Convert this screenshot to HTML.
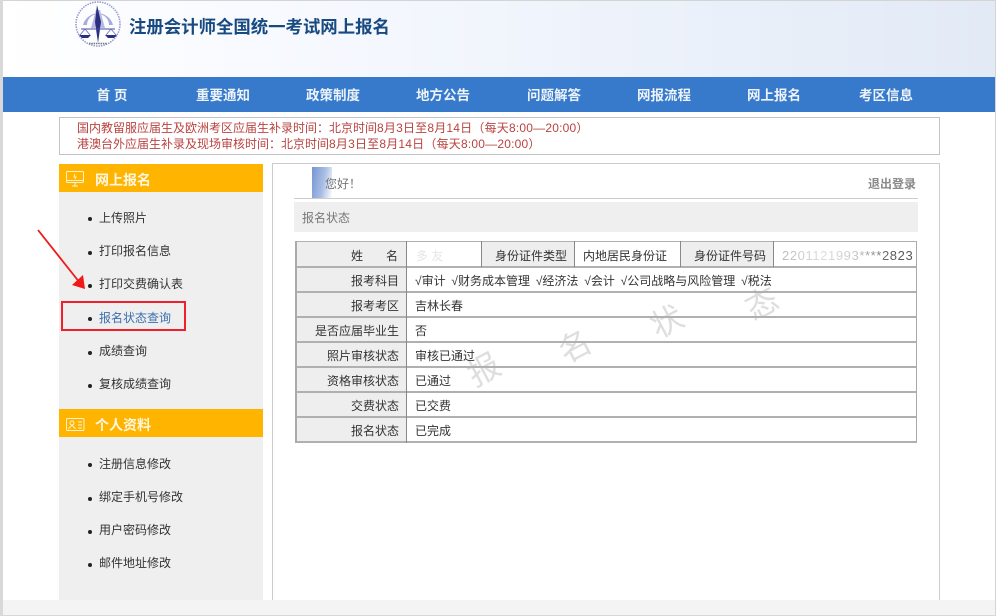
<!DOCTYPE html>
<html lang="zh-CN"><head><meta charset="utf-8"><title>注册会计师全国统一考试网上报名</title>
<style>
*{margin:0;padding:0;box-sizing:border-box}
html,body{width:996px;height:616px;overflow:hidden;background:#fff}
body{position:relative;font-family:"Liberation Sans","Noto Sans CJK SC",sans-serif;font-size:12px;color:#333;filter:blur(.3px)}
.a{position:absolute;white-space:nowrap}
.nav{position:absolute;top:77px;height:35px;line-height:37px;color:#eef3fa;font-size:13.5px;font-weight:bold;text-align:center;width:80px}
.n{left:77px;color:#b8433f;font-size:12px;line-height:16px}
.n span{letter-spacing:.2px}
.m{left:99px;font-size:12px;line-height:16px;color:#333}
.d{position:absolute;left:88px;width:4px;height:4px;border-radius:50%;background:#222}
.c{position:absolute;line-height:24px;font-size:12px;color:#333;white-space:nowrap}
.l{position:absolute;left:297px;width:110px;background:#eee}
.hl{position:absolute;left:295px;width:622px;height:2px;background:#b0b0b0}
.vl{position:absolute;width:1px;background:#888}
.lab{left:297px;width:102px;text-align:right}
.val{left:415px}
.wm{position:absolute;font-size:32px;color:#dedede;font-family:"Liberation Sans","Noto Sans CJK SC",sans-serif}
</style></head><body>
<div class="a" style="left:0;top:0;width:996px;height:77px;background:linear-gradient(90deg,#fff 0,#f8faff 25%,#eef3fb 60%,#e2eaf6 100%)"></div>
<div class="a" style="left:0;top:0;width:996px;height:1px;background:#d4d4d4"></div>
<div class="a" style="left:0;top:0;width:3px;height:616px;background:#d9d9d9"></div>
<div class="a" style="left:995px;top:0;width:1px;height:616px;background:#d4d4d4"></div>

<svg class="a" style="left:74px;top:1px" width="50" height="50" viewBox="0 0 50 50">
<circle cx="24" cy="23" r="22" fill="none" stroke="#9a9ccf" stroke-width="1.600" stroke-dasharray="1.500 1"/>
<path d="M9 24 A15.500 15.500 0 0 1 39 24 L35 24 A11 11 0 0 0 13 24Z" fill="#a9abdc"/>
<path d="M17 27 L22 9 L26 9 L31 27 L27 27 L24 18 L21 27Z" fill="#b7b9e4"/>
<path d="M23 4L27 21L24 42L21 21Z" fill="#2b2f80"/>
<path d="M7 28H41" stroke="#4a4d9e" stroke-width="1"/>
<path d="M11 28L6 34M11 28L16 34M37 28L32 34M37 28L42 34" stroke="#6a6cb8" stroke-width=".8"/>
<path d="M5 34H17L14 37H8Z M31 34H43L40 37H34Z" fill="#2b2f80"/>
<path d="M15 42.500H33" stroke="#777" stroke-width="1.500" stroke-dasharray="1.500 .8"/>
</svg>
<div class="a" style="left:129px;top:14px;font-size:17.400px;line-height:26px;font-weight:bold;color:#174a80">注册会计师全国统一考试网上报名</div>

<div class="a" style="left:3px;top:77px;width:992px;height:35px;background:#377acb"></div>
<div class="nav" style="left:72px">首 页</div>
<div class="nav" style="left:183px">重要通知</div>
<div class="nav" style="left:293px">政策制度</div>
<div class="nav" style="left:403px">地方公告</div>
<div class="nav" style="left:514px">问题解答</div>
<div class="nav" style="left:624px">网报流程</div>
<div class="nav" style="left:734px">网上报名</div>
<div class="nav" style="left:846px">考区信息</div>

<div class="a" style="left:59px;top:117px;width:881px;height:38px;border:1px solid #c4c4c4"></div>
<div class="a n" style="top:120px">国内教留服应届生及欧洲考区应届生补录时间：北京时间<span>8月3日至8月14日（每天8:00—20:00）</span></div>
<div class="a n" style="top:136px">港澳台外应届生补录及现场审核时间：北京时间<span>8月3日至8月14日（每天8:00—20:00）</span></div>

<div class="a" style="left:59px;top:164px;width:204px;height:436px;background:#efefef"></div>
<div class="a" style="left:59px;top:164px;width:204px;height:28px;background:#ffb400"></div>
<svg class="a" style="left:66px;top:171px" width="19" height="17" viewBox="0 0 19 17" fill="none" stroke="#fff3cf" stroke-width="1"><rect x=".5" y=".5" width="17" height="11" rx="1"/><path d="M1 9.500H17M6 15H12M9 12V15M9 3L8 6H10L9 8"/></svg>
<div class="a" style="left:95px;top:170px;font-size:14px;line-height:20px;font-weight:bold;color:#fff7e0">网上报名</div>
<div class="d" style="top:217px"></div><div class="a m" style="top:210px">上传照片</div>
<div class="d" style="top:251px"></div><div class="a m" style="top:243px">打印报名信息</div>
<div class="d" style="top:284px"></div><div class="a m" style="top:276px">打印交费确认表</div>
<div class="d" style="top:317px"></div><div class="a m" style="top:310px;color:#3a6fae">报名状态查询</div>
<div class="d" style="top:351px"></div><div class="a m" style="top:343px">成绩查询</div>
<div class="d" style="top:384px"></div><div class="a m" style="top:376px">复核成绩查询</div>
<div class="a" style="left:61px;top:301px;width:125px;height:30px;border:2px solid #f0202a"></div>
<svg class="a" style="left:30px;top:225px" width="70" height="70" viewBox="0 0 70 70"><path d="M8 5L50 58" stroke="#f01818" stroke-width="1.800"/><path d="M42 60L55 64L53 50Z" fill="#f01818"/></svg>

<div class="a" style="left:59px;top:409px;width:204px;height:28px;background:#ffb400"></div>
<svg class="a" style="left:66px;top:418px" width="19" height="14" viewBox="0 0 19 14" fill="none" stroke="#fff3cf" stroke-width="1"><rect x=".5" y=".5" width="17.500" height="12" rx="1"/><circle cx="6" cy="5" r="2"/><path d="M2.500 11L6 7L9.500 11M12 4H16M12 7H16M12 10H16"/></svg>
<div class="a" style="left:95px;top:415px;font-size:14px;line-height:20px;font-weight:bold;color:#fff7e0">个人资料</div>
<div class="d" style="top:463px"></div><div class="a m" style="top:456px">注册信息修改</div>
<div class="d" style="top:497px"></div><div class="a m" style="top:489px">绑定手机号修改</div>
<div class="d" style="top:530px"></div><div class="a m" style="top:522px">用户密码修改</div>
<div class="d" style="top:563px"></div><div class="a m" style="top:555px">邮件地址修改</div>

<div class="a" style="left:272px;top:163px;width:668px;height:437px;border:1px solid #ccc;border-bottom:0"></div>
<div class="a" style="left:312px;top:167px;width:20px;height:31px;background:linear-gradient(100deg,#7596d2 0,#a9bee4 55%,#fff 100%)"></div>
<div class="a" style="left:325px;top:176px;font-size:12px;line-height:16px;color:#777">您好！</div>
<div class="a" style="left:868px;top:176px;font-size:12px;line-height:16px;font-weight:bold;color:#8a8a8a">退出登录</div>
<div class="a" style="left:294px;top:198px;width:624px;height:1px;background:#ccc"></div>
<div class="a" style="left:294px;top:202px;width:624px;height:30px;background:#efefef"></div>
<div class="a" style="left:302px;top:210px;font-size:12px;line-height:16px;color:#777">报名状态</div>

<div class="wm" style="left:467px;top:345px;transform:rotate(-28deg)">报</div>
<div class="wm" style="left:558px;top:322px;transform:rotate(-28deg)">名</div>
<div class="wm" style="left:650px;top:297px;transform:rotate(-28deg)">状</div>
<div class="wm" style="left:745px;top:279px;transform:rotate(-28deg)">态</div>

<div class="l" style="top:242px;height:200px"></div>
<div class="l" style="left:482px;width:92px;top:242px;height:25px"></div>
<div class="l" style="left:681px;width:92px;top:242px;height:25px"></div>
<div class="hl" style="top:241px;height:1px"></div>
<div class="hl" style="top:266px"></div><div class="hl" style="top:291px"></div><div class="hl" style="top:316px"></div><div class="hl" style="top:341px"></div><div class="hl" style="top:366px"></div><div class="hl" style="top:391px"></div><div class="hl" style="top:416px"></div><div class="hl" style="top:441px"></div>
<div class="vl" style="left:295px;top:241px;height:202px;width:2px;background:#aaa"></div>
<div class="vl" style="left:406px;top:241px;height:202px"></div>
<div class="vl" style="left:481px;top:241px;height:26px"></div>
<div class="vl" style="left:574px;top:241px;height:26px"></div>
<div class="vl" style="left:680px;top:241px;height:26px"></div>
<div class="vl" style="left:773px;top:241px;height:26px"></div>
<div class="vl" style="left:916px;top:241px;height:202px;background:#aaa"></div>

<div class="c" style="left:351px;top:244px">姓</div><div class="c" style="left:386px;top:244px">名</div>
<div class="c" style="left:416px;top:244px;color:#e6e6e6">多 友</div>
<div class="c" style="left:495px;top:244px">身份证件类型</div>
<div class="c" style="left:583px;top:244px">内地居民身份证</div>
<div class="c" style="left:694px;top:244px">身份证件号码</div>
<div class="c" style="left:782px;top:244px;font-size:13px;letter-spacing:.6px;background:linear-gradient(90deg,#bbb 0,#ddd 30%,#ccc 55%,#555 85%);-webkit-background-clip:text;background-clip:text;color:transparent">2201121993****2823</div>

<div class="c lab" style="top:269px">报考科目</div><div class="c" style="left:415px;top:269px;word-spacing:2.500px">√审计 √财务成本管理 √经济法 √会计 √公司战略与风险管理 √税法</div>
<div class="c lab" style="top:294px">报考考区</div><div class="c val" style="top:294px">吉林长春</div>
<div class="c lab" style="top:319px">是否应届毕业生</div><div class="c val" style="top:319px">否</div>
<div class="c lab" style="top:344px">照片审核状态</div><div class="c val" style="top:344px">审核已通过</div>
<div class="c lab" style="top:369px">资格审核状态</div><div class="c val" style="top:369px">已通过</div>
<div class="c lab" style="top:394px">交费状态</div><div class="c val" style="top:394px">已交费</div>
<div class="c lab" style="top:419px">报名状态</div><div class="c val" style="top:419px">已完成</div>

<div class="a" style="left:3px;top:600px;width:992px;height:15px;background:#f4f4f4"></div>
<div class="a" style="left:0;top:615px;width:996px;height:1px;background:#d8d8d8"></div>
</body></html>
